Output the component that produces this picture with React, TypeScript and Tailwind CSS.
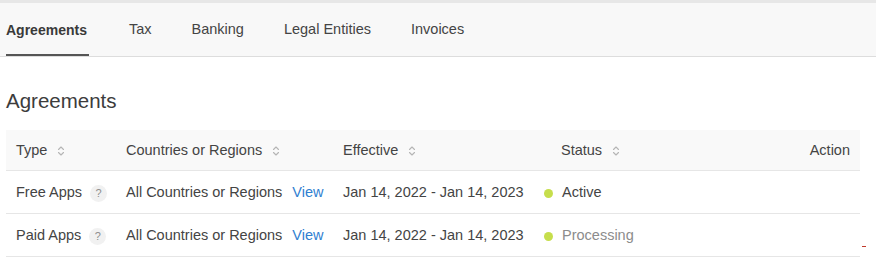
import React from "react";

const SortIcon = () => (
  <svg width="8" height="12" viewBox="0 0 8 12" className="ml-[10px] shrink-0" fill="none" stroke="#b5b5b5" strokeWidth="1.1" strokeLinecap="round" strokeLinejoin="round">
    <path d="M1.5 4.5 L4 2 L6.5 4.5" />
    <path d="M1.5 7.5 L4 10 L6.5 7.5" />
  </svg>
);

const Help = () => (
  <span className="ml-[8px] inline-flex h-[17px] w-[17px] items-center justify-center rounded-full bg-[#f1f1f1] text-[11px] text-[#8e8e8e]">?</span>
);

const Dot = () => <span className="mr-[9px] inline-block h-[9px] w-[9px] rounded-full bg-[#c6de4c]" />;

const tabs = ["Agreements", "Tax", "Banking", "Legal Entities", "Invoices"];

const rows = [
  { type: "Free Apps", status: "Active", statusCls: "text-[#444]" },
  { type: "Paid Apps", status: "Processing", statusCls: "text-[#8c8c8c]" },
];

export default function App() {
  return (
    <div className="relative h-[278px] w-[876px] overflow-hidden bg-white text-[#444]" style={{ fontFamily: '"Liberation Sans", Arial, sans-serif' }}>
      <div className="h-[3px] bg-[#e7e7e7]" />
      <div className="flex h-[54px] items-stretch gap-10 border-b border-[#dddddd] bg-[#f8f8f8] pl-[6px]">
        {tabs.map((t, i) => (
          <div
            key={t}
            className={
              i === 0
                ? "flex items-center border-b-2 border-[#555] pr-[2px] pt-[3px] text-[14px] font-bold text-[#3a3a3a]"
                : "flex items-center pt-[1px] text-[14.5px] text-[#444]"
            }
          >
            {t}
          </div>
        ))}
      </div>

      <h1 className="mt-[32px] pl-[6px] text-[20.5px] font-normal leading-[24px] text-[#3c3c3c]">Agreements</h1>

      <div className="ml-[6px] mt-[17px] w-[854px] text-[14.5px]">
        <div className="grid h-[41px] grid-cols-[110px_217px_218px_1fr_auto] items-center border-b border-[#e6e6e6] bg-[#f9f9f9] pt-[1px] text-[#444]">
          <div className="flex items-center pl-[10px]">Type<SortIcon /></div>
          <div className="flex items-center pl-[10px]">Countries or Regions<SortIcon /></div>
          <div className="flex items-center pl-[10px]">Effective<SortIcon /></div>
          <div className="flex items-center pl-[10px]">Status<SortIcon /></div>
          <div className="pr-[10px]">Action</div>
        </div>
        {rows.map((r) => (
          <div key={r.type} className="grid h-[43px] grid-cols-[110px_217px_218px_1fr_auto] items-center border-b border-[#e6e6e6] pt-[2px]">
            <div className="flex items-center pl-[10px]">{r.type}<Help /></div>
            <div className="flex items-center pl-[10px]">
              All Countries or Regions<span className="ml-[10px] text-[#2f80d1]">View</span>
            </div>
            <div className="pl-[10px]">Jan 14, 2022 - Jan 14, 2023</div>
            <div className="-ml-[7px] flex items-center"><Dot /><span className={r.statusCls}>{r.status}</span></div>
            <div />
          </div>
        ))}
      </div>
      <span className="absolute left-[862px] top-[246px] h-[1px] w-[4px] bg-[#c0392b]" />
    </div>
  );
}
